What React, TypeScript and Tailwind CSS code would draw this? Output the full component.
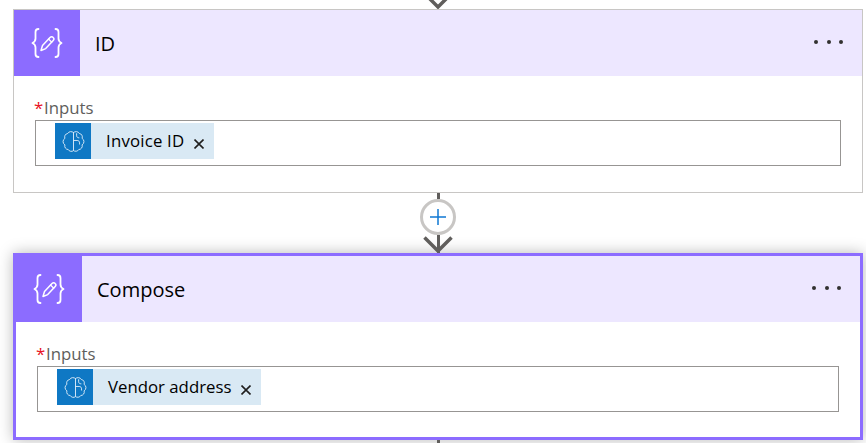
import React from "react";

const font = "font-['Open_Sans','Noto_Sans',sans-serif]";

const ComposeIcon = () => (
  <svg width="34" height="34" viewBox="0 0 34 34" fill="none" stroke="white" strokeLinecap="round" strokeLinejoin="round">
    <path d="M8.500 3c-2.500 0-3 1-3 3v6.500c0 2-1 3.500-3 4.500 2 1 3 2.500 3 4.500V28c0 2 .5 3 3 3" strokeWidth="1.800" />
    <path d="M25.500 3c2.500 0 3 1 3 3v6.500c0 2 1 3.500 3 4.500-2 1-3 2.500-3 4.500V28c0 2-.5 3-3 3" strokeWidth="1.800" />
    <path d="M11 24.500l1.500-5 7.500-8c1-1 2.300-1 3.200 0 .9.900.9 2.100 0 3.100l-7.500 8-4.700 1.900z" strokeWidth="1.500" />
    <path d="M18.500 13l3.300 3.200" strokeWidth="1.200" />
  </svg>
);

const BrainIcon = () => (
  <svg width="23" height="23" viewBox="0 0 22 22" fill="none" stroke="#dcebf7" strokeWidth="0.900" strokeLinecap="round" strokeLinejoin="round">
    <path d="M11 2.500A3.400 3.400 0 0 0 5.500 3.300 3.400 3.400 0 0 0 2.800 8 3.600 3.600 0 0 0 2.800 14.200 3.400 3.400 0 0 0 6 18.700 3.300 3.300 0 0 0 11 19.700V2.500" />
    <path d="M11 2.500A3.400 3.400 0 0 1 16.500 3.300 3.400 3.400 0 0 1 19.200 8 3.600 3.600 0 0 1 19.200 14.200 3.400 3.400 0 0 1 16 18.700 3.300 3.300 0 0 1 11 19.700" />
    <path d="M11 10H14.500C16 10 16.800 11 16.800 12.300V13.500M14 3.500V5.500C14 6.800 15 7.500 16.200 7.500" />
  </svg>
);

const Arrow = () => (
  <svg width="30" height="17" viewBox="0 0 30 17" fill="none" stroke="#605e5c" strokeWidth="3.500">
    <path d="M1.500 1.500L15 15 28.500 1.500" />
  </svg>
);

const Card = ({
  title,
  token,
  selected,
}: {
  title: string;
  token: string;
  selected?: boolean;
}) => (
  <div
    className={
      selected
        ? "flex flex-col w-[850px] h-[187px] ml-[13px] border-[3px] border-[#8c6cff] bg-white shadow-[0_0_14px_rgba(0,0,0,0.28)]"
        : "flex flex-col w-[850px] h-[184px] ml-[13px] border border-[#c8c6c4] bg-white"
    }
  >
    <div className="flex items-center h-[66px] shrink-0 bg-[#ede7ff]">
      <div className="flex items-center justify-center w-[66px] h-full bg-[#8c6cff]">
        <ComposeIcon />
      </div>
      <div className={`ml-[15px] mt-[2px] text-[20px] text-black ${font}`}>{title}</div>
      <div className="ml-auto mr-[19px] mb-[2px] flex gap-[8.500px]">
        <span className="w-[4px] h-[4px] rounded-full bg-[#323130]" />
        <span className="w-[4px] h-[4px] rounded-full bg-[#323130]" />
        <span className="w-[4px] h-[4px] rounded-full bg-[#323130]" />
      </div>
    </div>
    <div className="flex flex-col pl-[21px] pr-[21px] pt-[21px]">
      <div className={`flex h-[22px] items-center text-[16.800px] leading-none text-[#605e5c] ${font}`}>
        <span className="text-[#e81123] w-[10px] -ml-[1px]">*</span>Inputs
      </div>
      <div className="flex h-[46px] mt-[1px] items-start border border-[#979593] pl-[19px] pt-[2px]">
        <div className="flex items-center h-[36px] bg-[#d9e9f4]">
          <div className="flex items-center justify-center w-[36px] h-[36px] bg-[#0f78c4]">
            <BrainIcon />
          </div>
          <span className={`ml-[15px] text-[16.800px] text-black ${selected ? "" : "tracking-[0.2px]"} ${font}`}>{token}</span>
          <svg className="ml-[10px] mr-[10px] mt-[5px]" width="10" height="10" viewBox="0 0 10 10" stroke="#201f1e" strokeWidth="1.600">
            <path d="M0.500 0.500l9 9M9.500 0.500l-9 9" />
          </svg>
        </div>
      </div>
    </div>
  </div>
);

export default function App() {
  return (
    <div className="relative flex flex-col w-[866px] h-[443px] overflow-hidden bg-white">
      <div className="relative h-[9px]">
        <div className="absolute left-[423px] bottom-0">
          <Arrow />
        </div>
      </div>
      <Card title="ID" token="Invoice ID" />
      <div className="relative flex flex-col items-center h-[60px] ml-[10px]">
        <div className="w-[3px] h-[6px] bg-[#605e5c]" />
        <div className="flex items-center justify-center w-[36px] h-[36px] rounded-full border-[3px] border-[#c8c6c4] bg-white">
          <svg width="16" height="16" viewBox="0 0 16 16" stroke="#0f78d4" strokeWidth="1.500">
            <path d="M8 0v16M0 8h16" />
          </svg>
        </div>
        <div className="w-[3px] h-[18px] bg-[#605e5c]" />
        <div className="absolute bottom-0 left-1/2 -translate-x-1/2">
          <Arrow />
        </div>
      </div>
      <Card title="Compose" token="Vendor address" selected />
      <div className="absolute left-[437px] top-[440px] w-[3px] h-[3px] bg-[#605e5c]" />
    </div>
  );
}
